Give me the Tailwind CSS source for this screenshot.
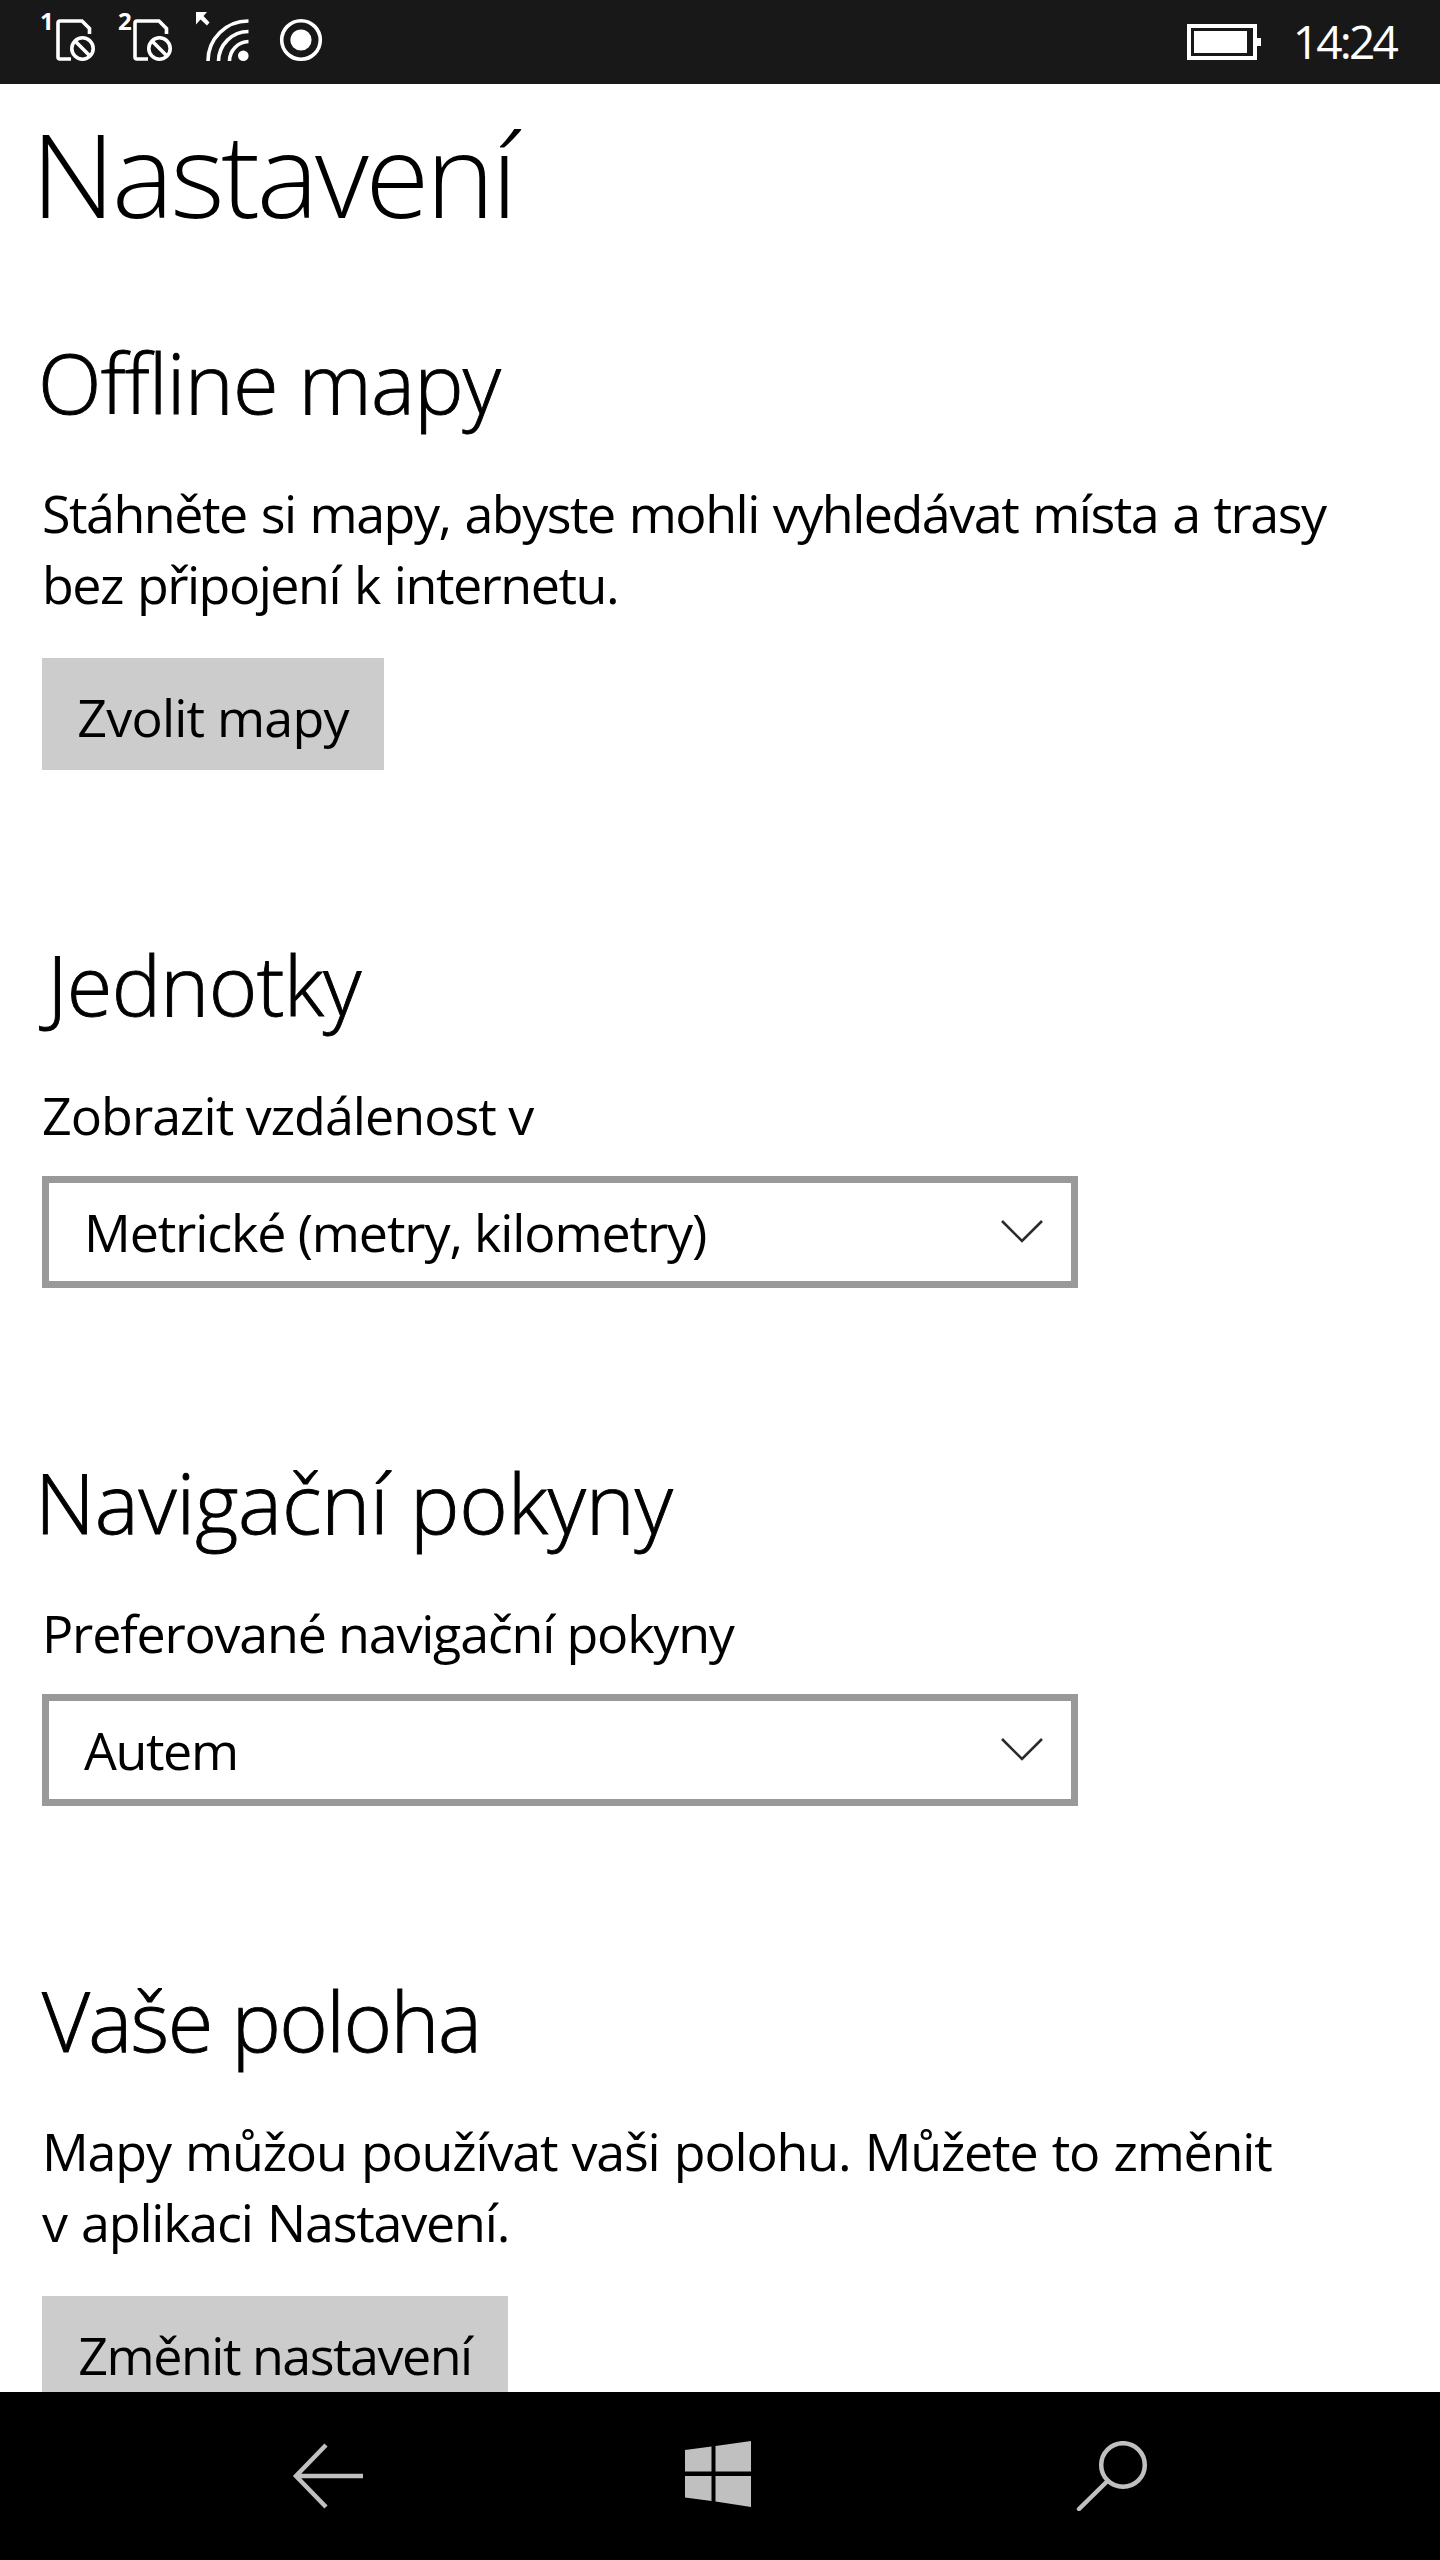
<!DOCTYPE html>
<html lang="cs">
  <head>
    <meta charset="UTF-8" />
    <meta name="viewport" content="width=device-width, initial-scale=1.0" />
    <title>Nastavení</title>
    <script src="https://cdn.jsdelivr.net/npm/@tailwindcss/browser@4"></script>
  </head>
  <body class="bg-white">
    <div
      class="flex flex-col w-[1440px] h-[2560px] overflow-hidden bg-white text-black font-['Open_Sans','Noto_Sans',sans-serif]"
    >
      <!-- Status Bar -->
      <header class="flex shrink-0 items-center justify-between h-[84px] bg-[#181818] text-white">
        <svg width="340" height="84" viewBox="0 0 340 84" fill="none" stroke="#fff" stroke-width="3.6">
          <!-- SIM 1 -->
          <text x="40" y="29.5" font-size="24" font-weight="700" fill="#fff" stroke="none">1</text>
          <g id="sim">
            <path d="M71 59H60Q58 59 58 57V23Q58 21 60 21H82L89.5 28.5V34" />
            <circle cx="82.5" cy="48.5" r="10.7" />
            <path d="M75 41L90 56" />
          </g>
          <!-- SIM 2 -->
          <text x="118" y="29.5" font-size="24" font-weight="700" fill="#fff" stroke="none">2</text>
          <use href="#sim" x="77" />
          <!-- Wi-Fi -->
          <path d="M196 12H207L203.500 16L209.500 22.500L207 25.500L200.500 19.500L196 24.500Z" fill="#fff" stroke="none" />
          <path d="M208 61A40 40 0 0 1 248.500 21M218.500 61A30 30 0 0 1 248.500 31.500M229.500 61A19.500 19.500 0 0 1 248.500 41.500" />
          <circle cx="243.3" cy="55.7" r="5.3" fill="#fff" stroke="none" />
          <!-- Recording -->
          <circle cx="301" cy="40" r="19.3" />
          <circle cx="301" cy="40" r="10.6" fill="#fff" stroke="none" />
        </svg>
        <div class="flex items-center pr-[44px]">
          <svg width="74" height="36" viewBox="0 0 74 36">
            <rect x="2" y="2" width="66" height="32" fill="none" stroke="#fff" stroke-width="4" />
            <rect x="7" y="7" width="53" height="22" fill="#fff" />
            <rect x="70" y="14" width="4" height="8" fill="#fff" />
          </svg>
          <span class="ml-[32px] pb-[2px] text-[46px] leading-[82px] tracking-[-2.8px]">14:24</span>
        </div>
      </header>

      <!-- Settings -->
      <main class="flex-1 overflow-hidden px-[42px] text-[52px] leading-[71px]">
        <h1 class="-ml-[11px] mt-[29px] text-[117px] leading-[120px] font-light tracking-[-3.6px]">Nastavení</h1>

        <section class="mt-[99px]">
          <h2 class="-ml-[4px] text-[83px] leading-[100px] font-light tracking-[-0.8px] [-webkit-text-stroke:0.9px_#000]">Offline mapy</h2>
          <p class="mt-[45px] whitespace-nowrap tracking-[-1.5px] [word-spacing:2px]">
            Stáhněte si mapy, abyste mohli vyhledávat místa a trasy<br />
            bez připojení k internetu.
          </p>
          <button class="mt-[39px] flex h-[112px] w-[342px] items-center justify-center pt-[4px] bg-[#ccc] tracking-[-0.8px]">
            Zvolit mapy
          </button>
        </section>

        <section class="mt-[164px]">
          <h2 class="ml-[5px] text-[83px] leading-[100px] font-light tracking-[-0.7px] [-webkit-text-stroke:0.9px_#000]">Jednotky</h2>
          <p class="mt-[45px] tracking-[-0.98px]">Zobrazit vzdálenost v</p>
          <div class="mt-[26px] flex h-[112px] w-[1036px] items-center justify-between border-[7px] border-[#999] pl-[35px] pr-[28px]">
            <span class="pb-[2px] tracking-[-1.13px]">Metrické (metry, kilometry)</span>
            <svg width="42" height="24" viewBox="0 0 42 24" fill="none" stroke="#2b2b2b" stroke-width="2.6">
              <path d="M1 1L21 21L41 1" />
            </svg>
          </div>
        </section>

        <section class="mt-[164px]">
          <h2 class="-ml-[7px] text-[83px] leading-[100px] font-light tracking-[-0.15px] [-webkit-text-stroke:0.9px_#000]">Navigační pokyny</h2>
          <p class="mt-[45px] tracking-[-1.2px]">Preferované navigační pokyny</p>
          <div class="mt-[26px] flex h-[112px] w-[1036px] items-center justify-between border-[7px] border-[#999] pl-[35px] pr-[28px]">
            <span class="pb-[2px] tracking-[-1.4px]">Autem</span>
            <svg width="42" height="24" viewBox="0 0 42 24" fill="none" stroke="#2b2b2b" stroke-width="2.6">
              <path d="M1 1L21 21L41 1" />
            </svg>
          </div>
        </section>

        <section class="mt-[164px]">
          <h2 class="text-[83px] leading-[100px] font-light tracking-[-1.63px] [-webkit-text-stroke:0.9px_#000]">Vaše poloha</h2>
          <p class="mt-[45px] whitespace-nowrap tracking-[-1.2px] [word-spacing:2px]">
            Mapy můžou používat vaši polohu. Můžete to změnit<br />
            v aplikaci Nastavení.
          </p>
          <button class="mt-[39px] flex h-[112px] w-[466px] items-center justify-center pt-[4px] bg-[#ccc] tracking-[-1.5px]">
            Změnit nastavení
          </button>
        </section>
      </main>

      <!-- Navigation Bar -->
      <nav class="flex h-[168px] shrink-0 items-center bg-black pl-[292px]">
        <!-- Back -->
        <svg width="72" height="68" viewBox="0 0 72 68" fill="none" stroke="#c0c0c0" stroke-width="4.5">
          <path d="M71 34H5M34 3L4 34L34 65" />
        </svg>
        <!-- Start -->
        <svg class="ml-[321px] mb-[4px]" width="66" height="66" viewBox="0 0 66 66" fill="#c0c0c0">
          <path d="M0 9L26.500 5.500V30.500H0ZM30.500 5L66 0V30.500H30.500ZM0 35H26.500V60L0 56.500ZM30.500 35H66V66L30.500 60.500Z" />
        </svg>
        <!-- Search -->
        <svg class="ml-[325px]" width="72" height="70" viewBox="0 0 72 70" fill="none" stroke="#c0c0c0" stroke-width="4.5">
          <circle cx="47" cy="24" r="21.8" />
          <path d="M31.5 40L3 68" stroke-linecap="round" />
        </svg>
      </nav>
    </div>
  </body>
</html>
